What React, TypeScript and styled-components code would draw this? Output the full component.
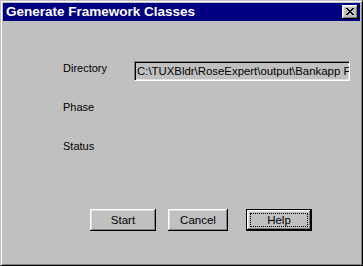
import styled, { createGlobalStyle } from 'styled-components';

const GlobalStyle = createGlobalStyle`
  html, body {
    margin: 0;
    padding: 0;
    background: #c0c0c0;
  }
  * {
    box-sizing: border-box;
  }
`;

const buttons = [
  { label: 'Start', width: 66 },
  { label: 'Cancel', width: 60 },
  { label: 'Help', width: 66, isDefault: true },
];

function App() {
  return (
    <>
      <GlobalStyle />
      <Window>
        <TitleBar>
          <Title>Generate Framework Classes</Title>
          <CloseButton aria-label="Close">
            <svg width="8" height="7" viewBox="0 0 8 7" shapeRendering="crispEdges">
              <path
                d="M0 0h2v1H0zM6 0h2v1H6zM1 1h2v1H1zM5 1h2v1H5zM2 2h4v1H2zM3 3h2v1H3zM2 4h4v1H2zM1 5h2v1H1zM5 5h2v1H5zM0 6h2v1H0zM6 6h2v1H6z"
                fill="#000"
              />
            </svg>
          </CloseButton>
        </TitleBar>
        <Body>
          <Form>
            <Label>Directory</Label>
            <Field>C:\TUXBldr\RoseExpert\output\Bankapp P</Field>
            <Label>Phase</Label>
            <span />
            <Label>Status</Label>
            <span />
          </Form>
          <ButtonRow>
            {buttons.map((b) => (
              <Button key={b.label} $width={b.width} $default={b.isDefault}>
                {b.label}
              </Button>
            ))}
          </ButtonRow>
        </Body>
      </Window>
    </>
  );
}

export default App;

const Window = styled.div`
  width: 363px;
  height: 266px;
  background: #c0c0c0;
  border: 1px solid;
  border-color: #c0c0c0 #000 #000 #c0c0c0;
  box-shadow: inset 1px 1px #fff, inset -1px -1px #808080;
  padding: 2px;
  display: flex;
  flex-direction: column;
  font-family: 'Liberation Sans', Arial, sans-serif;
`;

const TitleBar = styled.div`
  height: 18px;
  background: #000080;
  display: flex;
  align-items: center;
  justify-content: space-between;
  padding: 0 2px 0 3px;
`;

const Title = styled.span`
  color: #fff;
  font-weight: 700;
  font-size: 13.5px;
  line-height: 18px;
  white-space: nowrap;
`;

const CloseButton = styled.div`
  width: 16px;
  height: 14px;
  background: #c0c0c0;
  box-shadow: inset -1px -1px #000, inset 1px 1px #fff, inset -2px -2px #808080,
    inset 2px 2px #dfdfdf;
  display: flex;
  align-items: center;
  justify-content: center;
  padding: 0 1px 1px 0;
`;

const Body = styled.div`
  flex: 1;
  display: flex;
  flex-direction: column;
  padding: 37px 0 0 60px;
`;

const Form = styled.div`
  display: grid;
  grid-template-columns: 71px 216px;
  grid-template-rows: 39px 39px 20px;
`;

const Label = styled.span`
  font-size: 11px;
  line-height: 20px;
  color: #000;
`;

const Field = styled.div`
  margin-top: 3px;
  height: 20px;
  width: 216px;
  background: #c0c0c0;
  border: 1px solid;
  border-color: #808080 #fff #fff #808080;
  box-shadow: inset 1px 1px #000, inset -1px -1px #dfdfdf;
  padding: 0 0 0 2px;
  font-size: 11.4px;
  line-height: 18px;
  color: #000;
  white-space: nowrap;
  overflow: hidden;
`;

const ButtonRow = styled.div`
  display: flex;
  gap: 12px;
  margin-top: 53px;
  padding-left: 27px;
`;

const Button = styled.div<{ $width: number; $default?: boolean }>`
  position: relative;
  width: ${(p) => p.$width}px;
  height: 22px;
  margin-left: ${(p) => (p.$default ? 6 : 0)}px;
  background: #c0c0c0;
  border: ${(p) => (p.$default ? '1px solid #000' : 'none')};
  box-shadow: inset -1px -1px #000, inset 1px 1px #fff, inset -2px -2px #808080,
    inset 2px 2px #dfdfdf;
  display: flex;
  align-items: center;
  justify-content: center;
  font-size: 11.5px;
  color: #000;

  &::after {
    content: '';
    display: ${(p) => (p.$default ? 'block' : 'none')};
    position: absolute;
    inset: 3px;
    border: 1px dotted #000;
  }
`;
